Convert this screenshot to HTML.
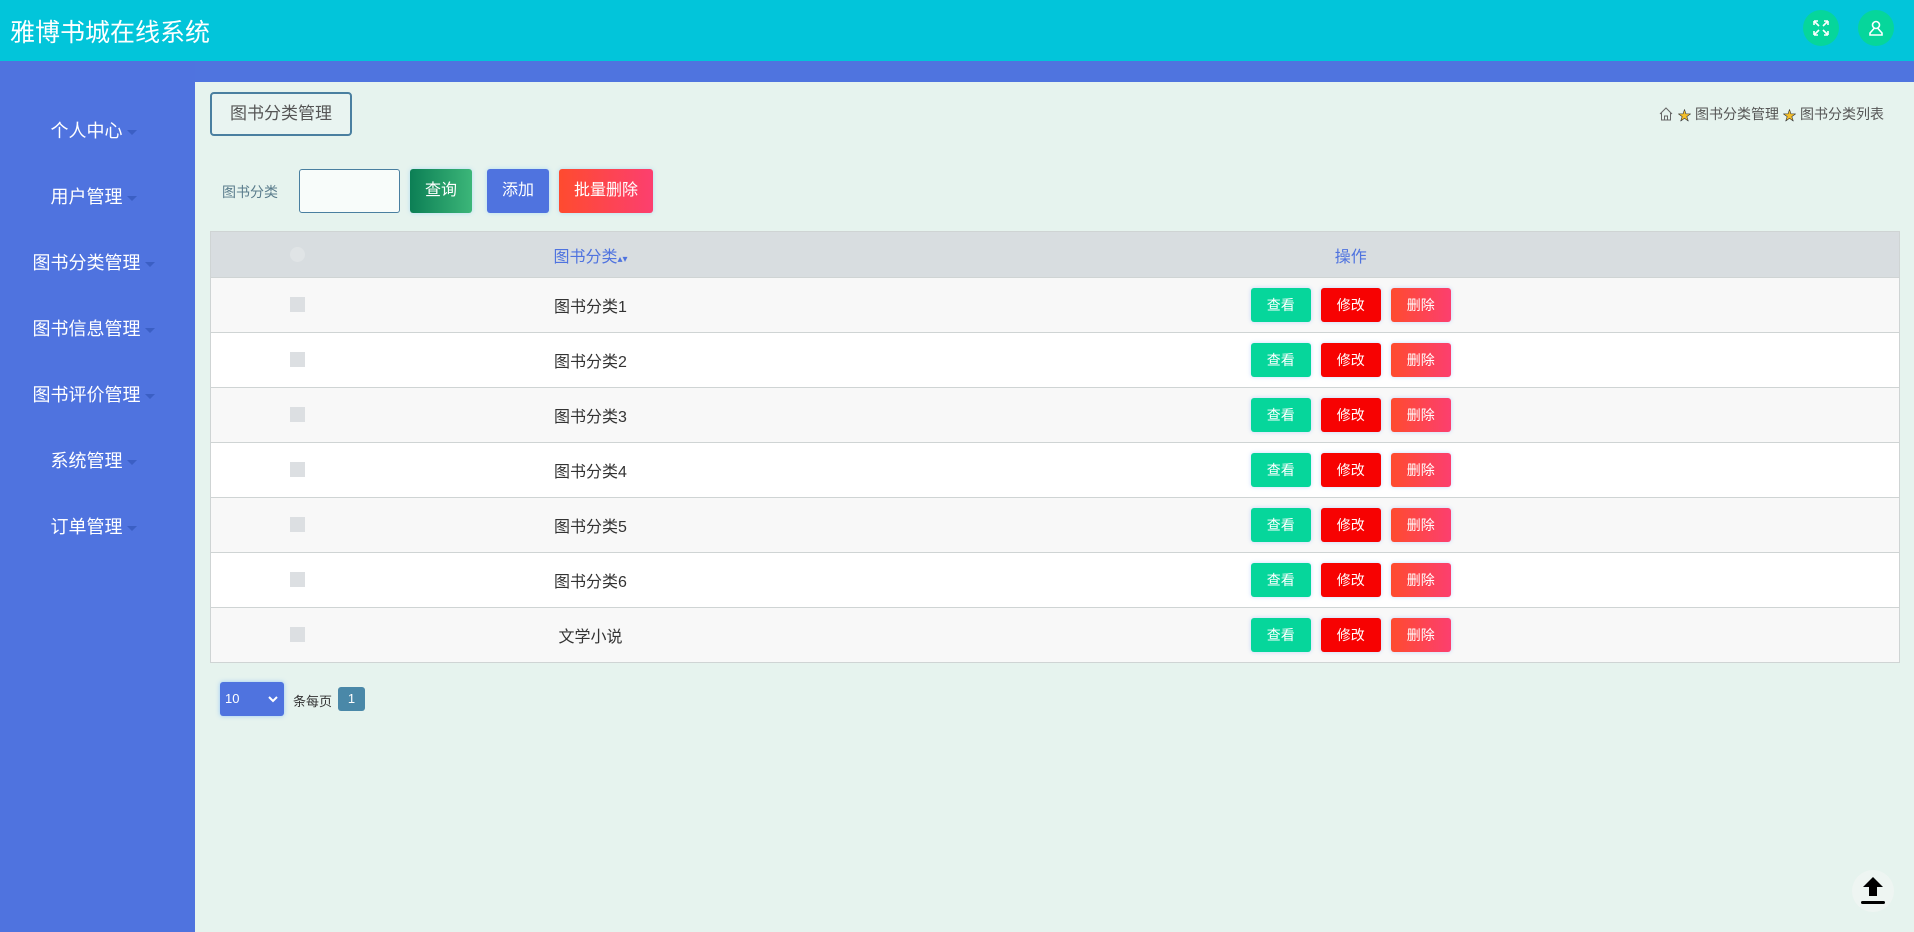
<!DOCTYPE html>
<html><head><meta charset="utf-8">
<style>
*{margin:0;padding:0;box-sizing:border-box}
body{width:1914px;height:932px;overflow:hidden;background:#e6f3ee;font-family:"Liberation Sans","Noto Sans CJK SC",sans-serif;position:relative}
.hdr{position:absolute;left:0;top:0;width:1914px;height:61px;background:#02c5da}
.hdr .t{position:absolute;left:10px;top:13px;color:#fff;font-size:25px}
.ic{position:absolute;top:10px;width:36px;height:36px;border-radius:50%;background:#06d69b;display:flex;align-items:center;justify-content:center}
.strip{position:absolute;left:0;top:61px;width:1914px;height:21px;background:#4f74df}
.side{position:absolute;left:0;top:61px;width:195px;height:871px;background:#4f73df}
.mi{position:absolute;left:0;width:195px;text-align:center;color:#fff;font-size:18px;line-height:24px;padding-right:8px}
.mi:after{content:"";display:inline-block;margin-left:4px;vertical-align:middle;border:5px solid transparent;border-top-color:#3b5fc4;border-bottom:0}
.tab{position:absolute;left:210px;top:92px;width:142px;height:44px;border:2px solid #4a7fa0;border-radius:4px;color:#555;font-size:17px;line-height:40px;text-align:center;background:#e9f4f1}
.bc{position:absolute;right:30px;top:104px;font-size:14px;color:#555;display:flex;align-items:center;gap:4px}
.st{color:#f5c02a;font-size:13px;-webkit-text-stroke:0.6px #333}
.lbl{position:absolute;left:222px;top:182px;font-size:14px;color:#5a7c8c}
.inp{position:absolute;left:299px;top:169px;width:101px;height:44px;border:1px solid #4a7fa0;border-radius:3px;background:#f8fcfa}
.btn{position:absolute;top:169px;height:44px;border-radius:3px;color:#fff;font-size:16px;line-height:44px;text-align:center;box-shadow:0 0 4px rgba(80,180,255,.35)}
table{position:absolute;left:210px;top:231px;width:1690px;border-collapse:collapse;border:1px solid #cfd4d4}
th{height:46px;background:#d8dde0;color:#4f73df;font-weight:normal;font-size:16px}
td{height:55px;border-top:1px solid #cfd4d4;font-size:16px;color:#333;text-align:center}
tr.o td{background:#f8f8f8}tr.e td{background:#fff}
.cb{display:inline-block;width:15px;height:15px;background:#dcdfe2;vertical-align:middle}
.ob{display:inline-block;width:60px;height:34px;line-height:34px;border-radius:3px;color:#fff;font-size:14px;margin:0 5px;box-shadow:0 0 4px rgba(120,160,255,.4)}
.ops{padding-left:6px}
</style></head><body>
<div class="hdr"><div class="t">雅博书城在线系统</div>
<div class="ic" style="left:1803px"><svg width="18" height="18" viewBox="0 0 18 18" fill="none" stroke="#fff" stroke-width="1.6"><path d="M2 2l5 5M2 2h4M2 2v4M16 2l-5 5M16 2h-4M16 2v4M2 16l5-5M2 16h4M2 16v-4M16 16l-5-5M16 16h-4M16 16v-4"/></svg></div>
<div class="ic" style="left:1858px"><svg width="18" height="18" viewBox="0 0 18 18" fill="none" stroke="#fff" stroke-width="1.6"><circle cx="9" cy="6" r="3.5"/><path d="M7 9.5L3 14v2h12v-2l-4-4.5"/></svg></div>
</div>
<div class="strip"></div>
<div class="side">
<div class="mi" style="top:58px">个人中心</div>
<div class="mi" style="top:124px">用户管理</div>
<div class="mi" style="top:190px">图书分类管理</div>
<div class="mi" style="top:256px">图书信息管理</div>
<div class="mi" style="top:322px">图书评价管理</div>
<div class="mi" style="top:388px">系统管理</div>
<div class="mi" style="top:454px">订单管理</div>
</div>
<div class="tab">图书分类管理</div>
<div class="bc"><svg width="16" height="16" viewBox="0 0 16 16" fill="none" stroke="#666"><path d="M2 8L8 2l6 6M3.5 7v7h9V7M6.5 14V10h3v4"/></svg>
<span class="st">★</span>图书分类管理 <span class="st">★</span>图书分类列表</div>
<div class="lbl">图书分类</div>
<div class="inp"></div>
<div class="btn" style="left:410px;width:62px;background:linear-gradient(90deg,#0c7f55,#3cb679)">查询</div>
<div class="btn" style="left:487px;width:62px;background:#4f73df">添加</div>
<div class="btn" style="left:559px;width:94px;background:linear-gradient(90deg,#fe4b2f,#fc3f6f)">批量删除</div>
<table>
<tr><th style="width:174px"><span class="cb" style="border-radius:50%;background:#e0e4e6"></span></th><th style="width:412px">图书分类<span style="font-size:10px">▴▾</span></th><th class="ops">操作</th></tr>
<tr class="o"><td><span class="cb"></span></td><td>图书分类1</td><td class="ops"><span class="ob" style="background:#06d69b">查看</span><span class="ob" style="background:#f70202">修改</span><span class="ob" style="background:linear-gradient(90deg,#fe4b2f,#fc3f6f)">删除</span></td></tr>
<tr class="e"><td><span class="cb"></span></td><td>图书分类2</td><td class="ops"><span class="ob" style="background:#06d69b">查看</span><span class="ob" style="background:#f70202">修改</span><span class="ob" style="background:linear-gradient(90deg,#fe4b2f,#fc3f6f)">删除</span></td></tr>
<tr class="o"><td><span class="cb"></span></td><td>图书分类3</td><td class="ops"><span class="ob" style="background:#06d69b">查看</span><span class="ob" style="background:#f70202">修改</span><span class="ob" style="background:linear-gradient(90deg,#fe4b2f,#fc3f6f)">删除</span></td></tr>
<tr class="e"><td><span class="cb"></span></td><td>图书分类4</td><td class="ops"><span class="ob" style="background:#06d69b">查看</span><span class="ob" style="background:#f70202">修改</span><span class="ob" style="background:linear-gradient(90deg,#fe4b2f,#fc3f6f)">删除</span></td></tr>
<tr class="o"><td><span class="cb"></span></td><td>图书分类5</td><td class="ops"><span class="ob" style="background:#06d69b">查看</span><span class="ob" style="background:#f70202">修改</span><span class="ob" style="background:linear-gradient(90deg,#fe4b2f,#fc3f6f)">删除</span></td></tr>
<tr class="e"><td><span class="cb"></span></td><td>图书分类6</td><td class="ops"><span class="ob" style="background:#06d69b">查看</span><span class="ob" style="background:#f70202">修改</span><span class="ob" style="background:linear-gradient(90deg,#fe4b2f,#fc3f6f)">删除</span></td></tr>
<tr class="o"><td><span class="cb"></span></td><td>文学小说</td><td class="ops"><span class="ob" style="background:#06d69b">查看</span><span class="ob" style="background:#f70202">修改</span><span class="ob" style="background:linear-gradient(90deg,#fe4b2f,#fc3f6f)">删除</span></td></tr>
</table>
<div style="position:absolute;left:220px;top:682px;width:64px;height:34px;background:#4f73df;border-radius:3px;color:#fff;font-size:13px;line-height:34px;padding-left:5px;box-shadow:0 0 4px rgba(80,160,255,.5)">10<svg style="position:absolute;right:6px;top:13px" width="10" height="8" viewBox="0 0 10 8" fill="none" stroke="#fff" stroke-width="2"><path d="M1 2l4 4 4-4"/></svg></div>
<div style="position:absolute;left:293px;top:691px;font-size:13px;color:#333">条每页</div>
<div style="position:absolute;left:338px;top:687px;width:27px;height:24px;background:#4a88a8;border-radius:3px;color:#fff;font-size:13px;line-height:24px;text-align:center">1</div>
<div style="position:absolute;left:1852px;top:870px;width:42px;height:42px;border-radius:50%;background:#eef5f2"><svg width="42" height="42" viewBox="0 0 42 42"><path d="M21 7L11 17h6v9h8v-9h6z" fill="#000"/><rect x="9" y="31" width="24" height="3" rx="1.5" fill="#000"/></svg></div>
</body></html>
